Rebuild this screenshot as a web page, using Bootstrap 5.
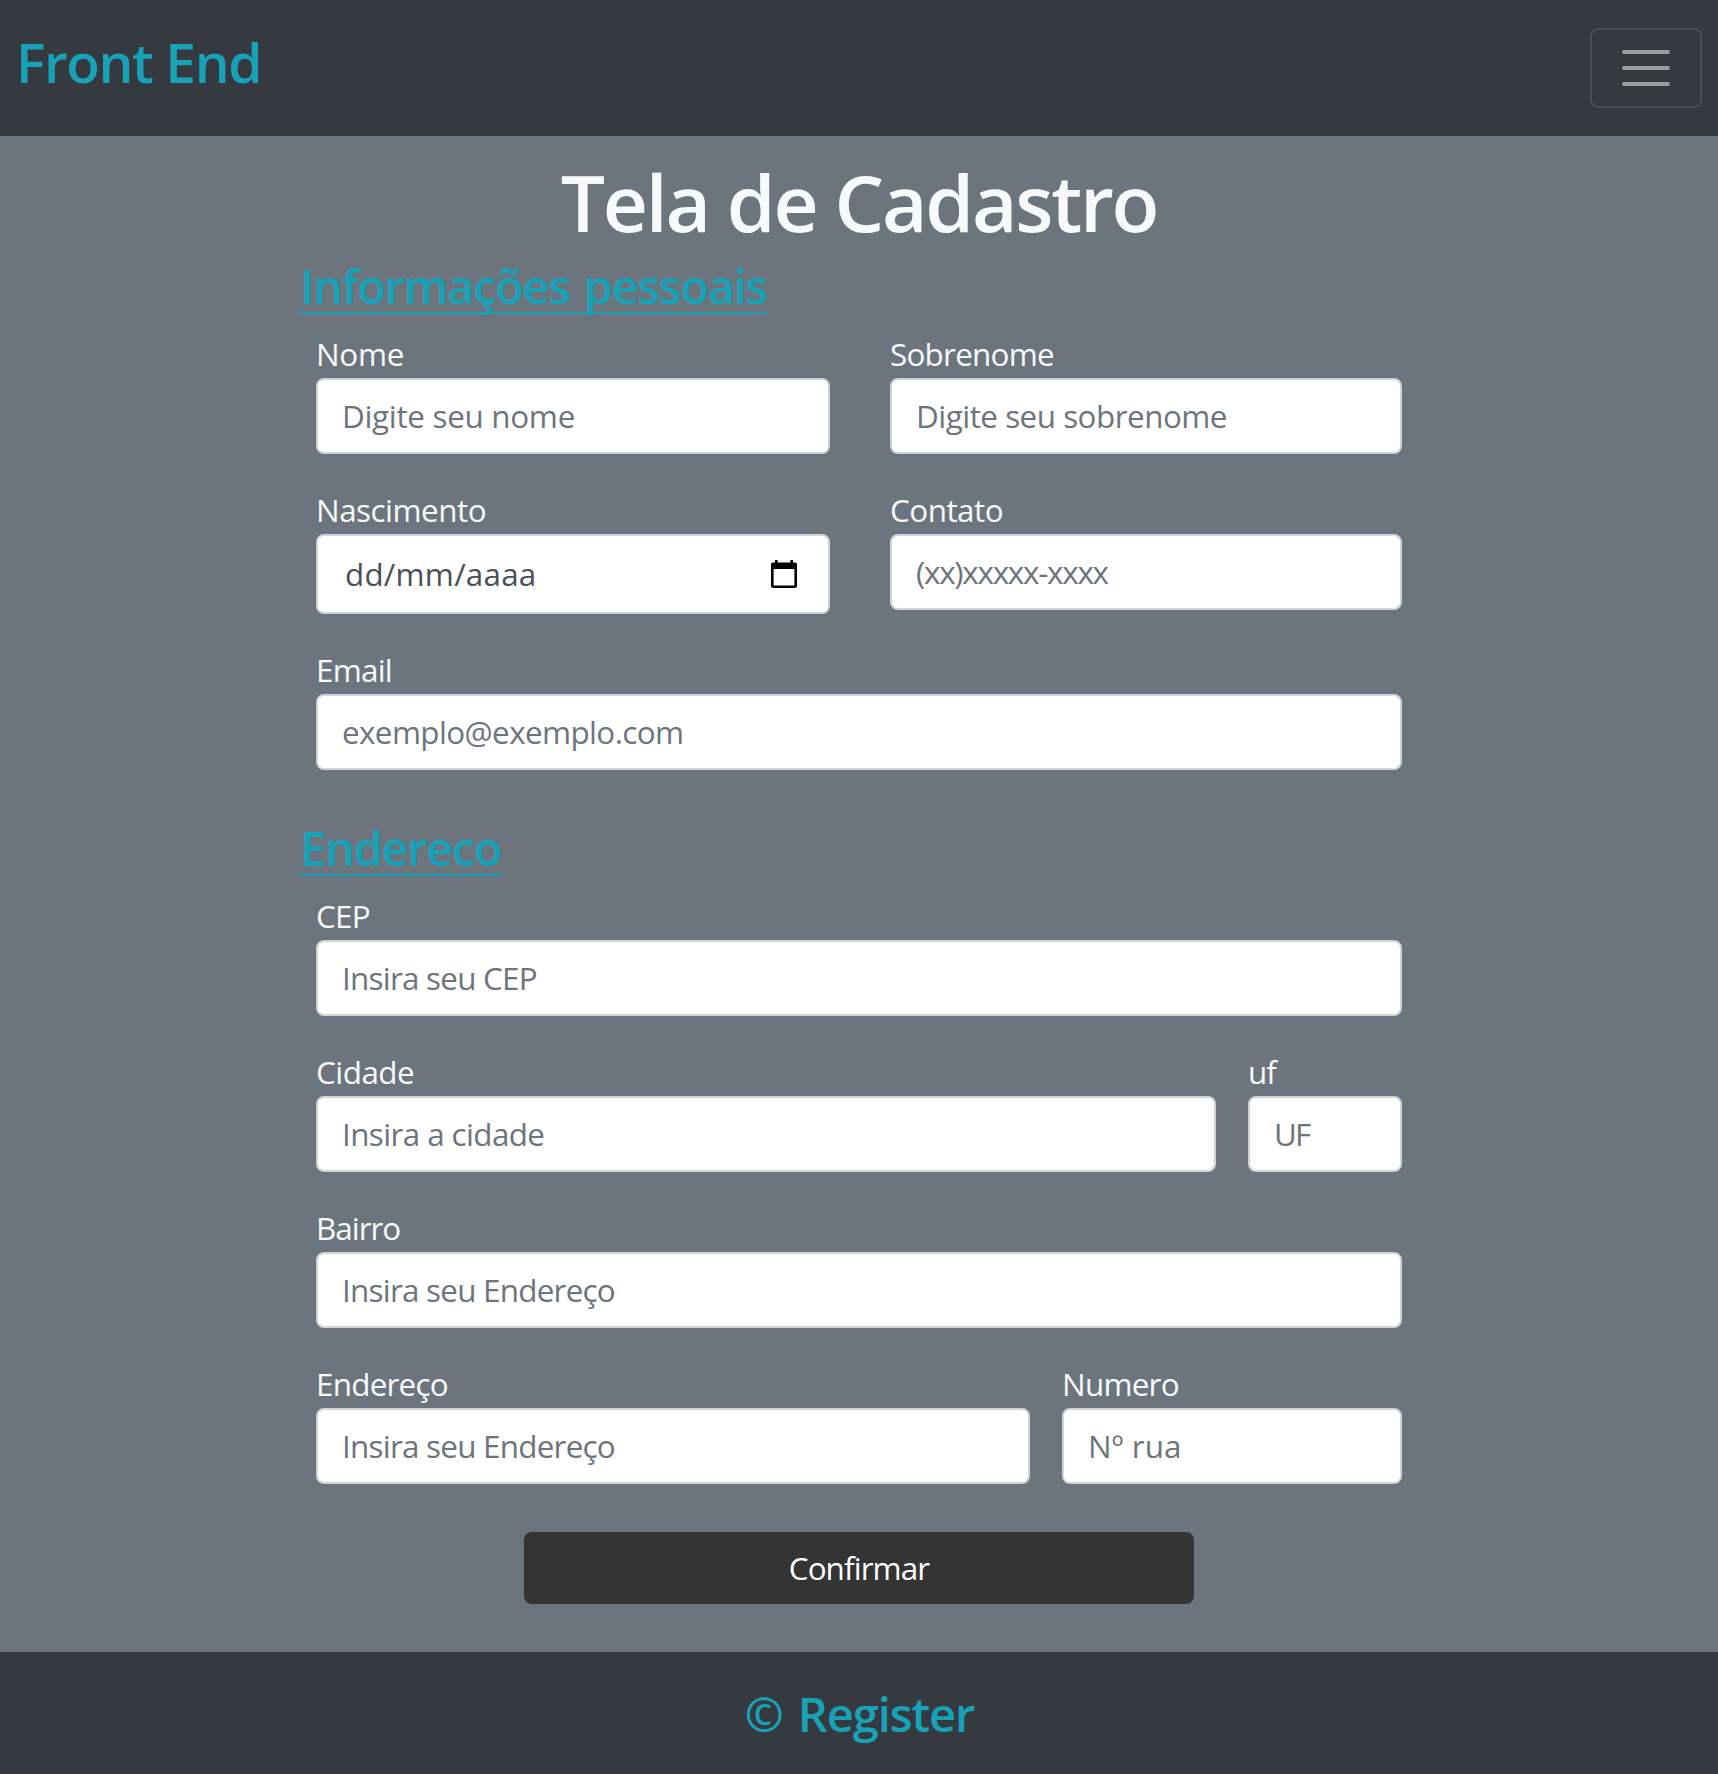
<!DOCTYPE html>
<html lang="pt-br">
<head>
<meta charset="utf-8">
<meta name="viewport" content="width=device-width, initial-scale=1">
<title>Tela de Cadastro</title>
<link href="https://cdn.jsdelivr.net/npm/bootstrap@5.3.0/dist/css/bootstrap.min.css" rel="stylesheet">
<style>
  html { font-size: 32px; }
  body { font-family: "Open Sans", "Noto Sans", sans-serif; font-size: 31.4px; line-height: 48px; letter-spacing: -.6px; background: #6c757d; color: #f8f9fa; }
  .bar-dark { background: #343a40; }
  .topbar { height: 136px; padding: 0 16px; }
  .teal { color: #17a2b8; font-weight: 600; }
  .brand { font-size: 55px; line-height: 67px; letter-spacing: -1.37px; padding-top: 2px; }
  .navbar-toggler { width: 112px; height: 80px; border: 2px solid rgba(255,255,255,.1); border-radius: 8px; padding: 0; }
  .navbar-toggler svg { display: block; }
  .page-title { font-size: 78.5px; line-height: 96px; font-weight: 600; letter-spacing: -2.26px; padding-top: 18px; margin-bottom: 7px; }
  .form-area { width: 1118px; }
  .section-title { font-size: 47px; line-height: 58px; letter-spacing: -1.33px; word-spacing: 3px; margin-bottom: 15px; text-decoration: underline; text-decoration-thickness: 2px; text-underline-offset: 8px; text-decoration-skip-ink: none; }
  .section-next { padding-top: 17px; }
  .form-label { display: block; margin: 0; }
  .form-control { height: 76px; border: 2px solid #ced4da; border-radius: 8px; background: #fff; color: #495057; font-size: 31.4px; line-height: 48px; letter-spacing: inherit; padding: 11px 24px 13px; }
  .form-control::placeholder { color: #6c757d; opacity: 1; }
  .date-box { height: 80px; padding: 0 31px 0 27px; letter-spacing: .22px; }
  .gap-wide { gap: 60px; }
  .w-city { width: 900px; }
  .w-street { width: 714px; }
  .w-half { width: 514px; }
  .ls-a { letter-spacing: -.3px; }
  .ls-b { letter-spacing: -.5px; }
  .ls-c { letter-spacing: -.75px; }
  .ls-d { letter-spacing: -1px; }
  .ls-phone { letter-spacing: -1.26px; }
  .ls-uf { letter-spacing: -2px; }
  .ls-num { letter-spacing: .1px; }
  .btn-confirm, .btn-confirm:hover { width: 670px; height: 72px; background: #343434; color: #fff; border: 0; border-radius: 8px; font-size: 31.4px; line-height: 48px; letter-spacing: -.9px; padding: 0; }
  .foot { height: 122px; }
  .foot-title { font-size: 47px; letter-spacing: -1.07px; word-spacing: 4px; padding: 3px 0 0 1px; }
</style>
</head>
<body>
<nav class="navbar navbar-dark bar-dark topbar d-flex justify-content-between align-items-center flex-nowrap">
  <h3 class="brand teal mb-2">Front End</h3>
  <button class="navbar-toggler d-flex align-items-center justify-content-center" type="button" aria-label="Menu">
    <svg width="60" height="60" viewBox="0 0 30 30"><path stroke="rgba(255,255,255,.5)" stroke-linecap="round" stroke-miterlimit="10" stroke-width="2" d="M4 7h22M4 15h22M4 23h22"/></svg>
  </button>
</nav>

<main>
  <h1 class="page-title text-center">Tela de Cadastro</h1>
  <form class="form-area mx-auto">
    <h4 class="section-title teal">Informações pessoais</h4>
    <div class="px-2">
      <div class="d-flex align-items-start gap-wide mb-3">
        <div class="w-half flex-shrink-0">
          <label class="form-label ls-a" for="nome">Nome</label>
          <input class="form-control ls-a" id="nome" placeholder="Digite seu nome">
        </div>
        <div class="flex-fill">
          <label class="form-label ls-c" for="sobrenome">Sobrenome</label>
          <input class="form-control ls-b" id="sobrenome" placeholder="Digite seu sobrenome">
        </div>
      </div>
      <div class="d-flex align-items-start gap-wide mb-3">
        <div class="w-half flex-shrink-0">
          <span class="form-label ls-b">Nascimento</span>
          <div class="form-control date-box d-flex align-items-center justify-content-between">
            <span>dd/mm/aaaa</span>
            <svg width="26" height="28" viewBox="0 0 26 28"><path fill="#000" fill-rule="evenodd" d="M4 0h2.600v2.600h12.800V0H22v2.600h2a2 2 0 0 1 2 2V26a2 2 0 0 1-2 2H2a2 2 0 0 1-2-2V4.600a2 2 0 0 1 2-2h2zM2.600 9v16.400h20.800V9z"/></svg>
          </div>
        </div>
        <div class="flex-fill">
          <label class="form-label ls-b" for="contato">Contato</label>
          <input class="form-control ls-phone" id="contato" placeholder="(xx)xxxxx-xxxx">
        </div>
      </div>
      <div class="mb-3">
        <label class="form-label ls-c" for="email">Email</label>
        <input class="form-control" id="email" placeholder="exemplo@exemplo.com">
      </div>
    </div>

    <h4 class="section-title section-next teal">Endereco</h4>
    <div class="px-2">
      <div class="mb-3">
        <label class="form-label ls-c" for="cep">CEP</label>
        <input class="form-control ls-c" id="cep" placeholder="Insira seu CEP">
      </div>
      <div class="d-flex gap-3 mb-3">
        <div class="w-city flex-shrink-0">
          <label class="form-label ls-b" for="cidade">Cidade</label>
          <input class="form-control" id="cidade" placeholder="Insira a cidade">
        </div>
        <div class="flex-fill">
          <label class="form-label ls-d" for="uf">uf</label>
          <input class="form-control ls-uf" id="uf" placeholder="UF">
        </div>
      </div>
      <div class="mb-3">
        <label class="form-label ls-d" for="bairro">Bairro</label>
        <input class="form-control ls-c" id="bairro" placeholder="Insira seu Endereço">
      </div>
      <div class="d-flex gap-3 mb-3">
        <div class="w-street flex-shrink-0">
          <label class="form-label ls-c" for="endereco">Endereço</label>
          <input class="form-control ls-c" id="endereco" placeholder="Insira seu Endereço">
        </div>
        <div class="flex-fill">
          <label class="form-label ls-c" for="numero">Numero</label>
          <input class="form-control ls-num" id="numero" placeholder="Nº rua">
        </div>
      </div>
    </div>
    <div class="d-flex justify-content-center pt-2 pb-4">
      <button class="btn btn-confirm" type="button">Confirmar</button>
    </div>
  </form>
</main>

<footer class="bar-dark foot d-flex align-items-center justify-content-center">
  <h4 class="foot-title teal mb-0">© Register</h4>
</footer>
<script src="https://cdn.jsdelivr.net/npm/bootstrap@5.3.0/dist/js/bootstrap.bundle.min.js"></script>
</body>
</html>
